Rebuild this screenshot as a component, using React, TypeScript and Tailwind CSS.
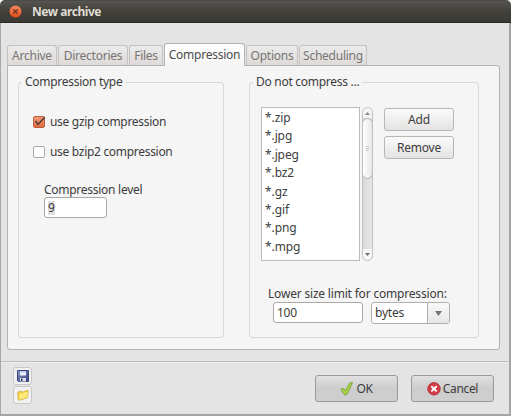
import type { ReactNode } from "react";

const tabs = [
  { label: "Archive", box: "w-[50px]" },
  { label: "Directories", box: "w-[70px]" },
  { label: "Files", box: "w-[34px]" },
  { label: "Compression", box: "w-[81px]", active: true },
  { label: "Options", box: "w-[52px]" },
  { label: "Scheduling", box: "w-[68px]" },
];

const patterns = ["*.zip", "*.jpg", "*.jpeg", "*.bz2", "*.gz", "*.gif", "*.png", "*.mpg"];

function Group({ title, className, children }: { title: string; className: string; children: ReactNode }) {
  return (
    <fieldset className={`h-[265px] min-w-0 rounded-[4px] ${className}`}>
      <div className="flex h-[18px] items-center">
        <span className="mt-[9px] h-[9px] w-[4px] shrink-0 rounded-tl-[4px] border-l border-t border-[#d8d8d8]" />
        <span className="px-[3px] tracking-[-0.28px] whitespace-nowrap">{title}</span>
        <span className="mt-[9px] h-[9px] grow rounded-tr-[4px] border-r border-t border-[#d8d8d8]" />
      </div>
      <div className="h-[247px] rounded-b-[4px] border-x border-b border-[#d8d8d8]">{children}</div>
    </fieldset>
  );
}

function Check({ label, checked }: { label: string; checked?: boolean }) {
  return (
    <label className="flex h-[18px] items-center gap-[5px]">
      <span
        className={`h-[12px] w-[12px] shrink-0 rounded-[2px] border ${
          checked ? "border-[#b8603f] bg-gradient-to-b from-[#f39a76] to-[#e5683e]" : "border-[#a9a6a3] bg-white"
        }`}
      >
        {checked && (
          <svg viewBox="0 0 12 12" className="-ml-px -mt-px h-[12px] w-[12px] overflow-visible">
            <path d="M2.5 5 5 8.5 11.7 1.2" fill="none" stroke="#493a35" strokeWidth="1.4" />
          </svg>
        )}
      </span>
      <span className="tracking-[-0.3px] whitespace-nowrap">{label}</span>
    </label>
  );
}

function Floppy() {
  return (
    <svg viewBox="0 0 12 12" className="h-[12px] w-[12px]">
      <defs>
        <linearGradient id="disk" x2="1" y2="1">
          <stop stopColor="#8a9acb" />
          <stop offset="1" stopColor="#343c78" />
        </linearGradient>
      </defs>
      <path d="M.5.5h11v11h-10l-1-1z" fill="url(#disk)" stroke="#3b4478" />
      <path d="M3 1h6v4.5H3z" fill="#eaf0f9" />
      <path d="M3 1h6v1.5H3z" fill="#b4caea" />
      <path d="M3 8h6v3.5H3z" fill="#dce0e9" />
      <path d="M4 8.5h1.5v2.5H4z" fill="#303c68" />
    </svg>
  );
}

function Folder() {
  return (
    <svg viewBox="0 0 12 12" className="h-[12px] w-[12px]">
      <path d="M.8 3.3 4.2 2l1 1.3L10.7 1.2l.6.8-.8 6.8-8.8 2.5-.6-.7z" fill="#f4cf3c" stroke="#cfa535" strokeWidth=".7" />
      <path d="m2 5 9-2.5-.9 5.9-8 2.3z" fill="#fde875" />
    </svg>
  );
}

export default function App() {
  return (
    <div className="h-[416px] w-[511px] overflow-hidden bg-white font-['Noto_Sans','Open_Sans',sans-serif] text-[12px] leading-[18px] text-[#3c3c3c]">
      <div className="flex h-full flex-col overflow-hidden rounded-t-[5px] bg-[#e4e4e4]">
        <header className="flex h-[23px] shrink-0 items-center border-b border-t border-b-[#292824] border-t-[#4c4b47] bg-gradient-to-b from-[#555450] via-[#41403b] to-[#3a3934] pl-[9px]">
          <svg viewBox="0 0 13 13" className="h-[13px] w-[13px]">
            <defs>
              <linearGradient id="close" x2="0" y2="1">
                <stop stopColor="#f58b63" />
                <stop offset="1" stopColor="#df4c19" />
              </linearGradient>
            </defs>
            <circle cx="6.5" cy="6.5" r="6.3" fill="url(#close)" stroke="#2e2d29" strokeWidth=".4" />
            <path d="m4.3 4.3 4.4 4.4m0-4.4L4.3 8.7" stroke="#58291b" strokeWidth="1.1" />
          </svg>
          <h1 className="ml-[10px] text-[12px] font-bold tracking-[-0.45px] text-[#dfdbd2]">New archive</h1>
        </header>

        <div className="flex grow flex-col border-b-2 border-l border-r-2 border-b-[#a5a5a2] border-l-[#aaa6a2] border-r-[#a5a5a2]">
          <main className="h-[338px] pl-[6px] pr-[8px] pt-[20px]">
            <nav className="flex h-[22px] items-end gap-px">
              {tabs.map((t) => (
                <div
                  key={t.label}
                  className={`flex shrink-0 items-center justify-center rounded-t-[3px] border border-b-0 ${t.box} ${
                    t.active
                      ? "z-10 -mb-px h-[23px] border-[#b5b3b0] bg-gradient-to-b from-white to-[#f5f5f5] text-[#4c4c4c]"
                      : "h-[20px] border-[#c4c1be] bg-gradient-to-b from-[#ebebeb] to-[#dedad8] text-[#777573]"
                  }`}
                >
                  <span className="tracking-[-0.25px]">{t.label}</span>
                </div>
              ))}
            </nav>

            <section className="flex h-[285px] w-[493px] items-start rounded-b-[3px] rounded-tr-[3px] border border-[#b5b2af] bg-[#f5f5f5] pl-[10px] pt-[7px]">
              <Group title="Compression type" className="w-[206px]">
                <div className="flex flex-col gap-[12px] pl-[14px] pt-[22px]">
                  <Check label="use gzip compression" checked />
                  <Check label="use bzip2 compression" />
                </div>
                <div className="pl-[25px] pt-[20px]">
                  <p className="h-[16px] tracking-[-0.27px] whitespace-nowrap">Compression level</p>
                  <div className="flex h-[21px] w-[63px] items-center rounded-[3px] border border-[#aaa8a6] bg-white pl-[3px]">
                    <span className="h-[14px] bg-[#dededc] leading-[14px]">9</span>
                  </div>
                </div>
              </Group>

              <Group title="Do not compress ..." className="ml-[25px] w-[230px]">
                <div className="flex items-start pl-[11px] pt-[16px]">
                  <ul className="h-[154px] w-[99px] border border-[#bdbbb8] bg-white pl-[3px] pt-[1px]">
                    {patterns.map((p) => (
                      <li key={p} className="h-[18.4px] leading-[18.4px] tracking-[-0.1px]">
                        {p}
                      </li>
                    ))}
                  </ul>
                  <div className="ml-[2px] flex h-[154px] w-[11px] flex-col items-center overflow-hidden rounded-full border border-[#c2bfbc] bg-gradient-to-r from-[#dcdad8] to-[#e8e6e5]">
                    <span className="flex h-[10px] w-full shrink-0 items-center justify-center bg-[#f4f4f4]">
                      <svg viewBox="0 0 5 3" className="h-[3px] w-[5px]">
                        <path d="M0 3 2.5 0 5 3z" fill="#8b8987" />
                      </svg>
                    </span>
                    <span className="-mx-px flex h-[61px] w-[11px] shrink-0 flex-col items-center justify-center gap-px rounded-full border border-[#b2b0ad] bg-gradient-to-r from-white to-[#e9e7e6]">
                      <i className="h-px w-[3px] bg-[#c8c6c4]" />
                      <i className="h-px w-[3px] bg-[#c8c6c4]" />
                      <i className="h-px w-[3px] bg-[#c8c6c4]" />
                    </span>
                    <span className="mt-auto flex h-[11px] w-full items-center justify-center rounded-b-full bg-[#f8f8f8]">
                      <svg viewBox="0 0 5 3" className="h-[3px] w-[5px]">
                        <path d="M0 0h5L2.5 3z" fill="#6f6d6b" />
                      </svg>
                    </span>
                  </div>
                  <div className="ml-[11px] flex flex-col gap-[5px] pt-px">
                    {["Add", "Remove"].map((b) => (
                      <button
                        key={b}
                        className="h-[23px] w-[70px] rounded-[3px] border border-[#b8b6b4] bg-gradient-to-b from-[#fbfbfb] to-[#e4e3e2] leading-[20px] tracking-[-0.2px]"
                      >
                        {b}
                      </button>
                    ))}
                  </div>
                </div>
                <p className="ml-[18px] mt-[24px] h-[17px] tracking-[-0.19px] whitespace-nowrap">Lower size limit for compression:</p>
                <div className="ml-[23px] flex gap-[8px]">
                  <div className="h-[21px] w-[90px] rounded-[3px] border border-[#aaa8a6] bg-white pl-[3px] leading-[19px] tracking-[-0.3px]">100</div>
                  <div className="flex h-[22px] w-[79px] overflow-hidden rounded-[3px] border border-[#b1afac] bg-white">
                    <span className="w-[56px] border-r border-[#b1afac] pl-[3px] leading-[20px] tracking-[-0.2px]">bytes</span>
                    <span className="flex grow items-center justify-center bg-gradient-to-b from-[#f9f9f9] to-[#e7e6e5]">
                      <svg viewBox="0 0 7 5" className="h-[5px] w-[7px]">
                        <path d="M0 0h7L3.5 5z" fill="#777573" />
                      </svg>
                    </span>
                  </div>
                </div>
              </Group>
            </section>
          </main>

          <footer className="flex grow justify-between border-t border-[#bcbcbc] pl-[12px] pr-[15px] shadow-[inset_0_1px_0_#f0f0f0]">
            <div className="flex flex-col gap-px pt-[5px]">
              <button className="flex h-[18px] w-[19px] items-center justify-center rounded-[3px] border border-[#c9c7c5] bg-[#f1f1f1]">
                <Floppy />
              </button>
              <button className="flex h-[18px] w-[19px] items-center justify-center rounded-[3px] border border-[#c9c7c5] bg-[#f1f1f1]">
                <Folder />
              </button>
            </div>
            <div className="flex gap-[13px] pt-[13px]">
              <button className="flex h-[27px] w-[83px] items-center justify-center gap-[2px] rounded-[3px] border border-[#9a9a9a] bg-gradient-to-b from-[#e1e1e1] via-[#cccccc] to-[#cfcfcf]">
                <svg viewBox="0 0 14 14" className="h-[14px] w-[14px]">
                  <path d="m1 7.5 2-1.3 2.2 2.6L9.8.9l2.7-.3L7.4 11.8l-2.6 1.4z" fill="#a9d345" stroke="#6f9c30" strokeWidth=".8" />
                </svg>
                <span className="tracking-[-0.3px]">OK</span>
              </button>
              <button className="flex h-[27px] w-[83px] items-center justify-center gap-[2px] rounded-[3px] border border-[#9a9a9a] bg-gradient-to-b from-[#e1e1e1] via-[#cccccc] to-[#cfcfcf]">
                <svg viewBox="0 0 14 14" className="h-[14px] w-[14px]">
                  <circle cx="7" cy="6.8" r="6.2" fill="#d63c45" stroke="#b02c34" strokeWidth=".9" />
                  <path d="m4.9 4.7 4.2 4.2m0-4.2L4.9 8.9" stroke="#fff" strokeWidth="2" strokeLinecap="round" />
                </svg>
                <span className="tracking-[-0.35px]">Cancel</span>
              </button>
            </div>
          </footer>
        </div>
      </div>
    </div>
  );
}
